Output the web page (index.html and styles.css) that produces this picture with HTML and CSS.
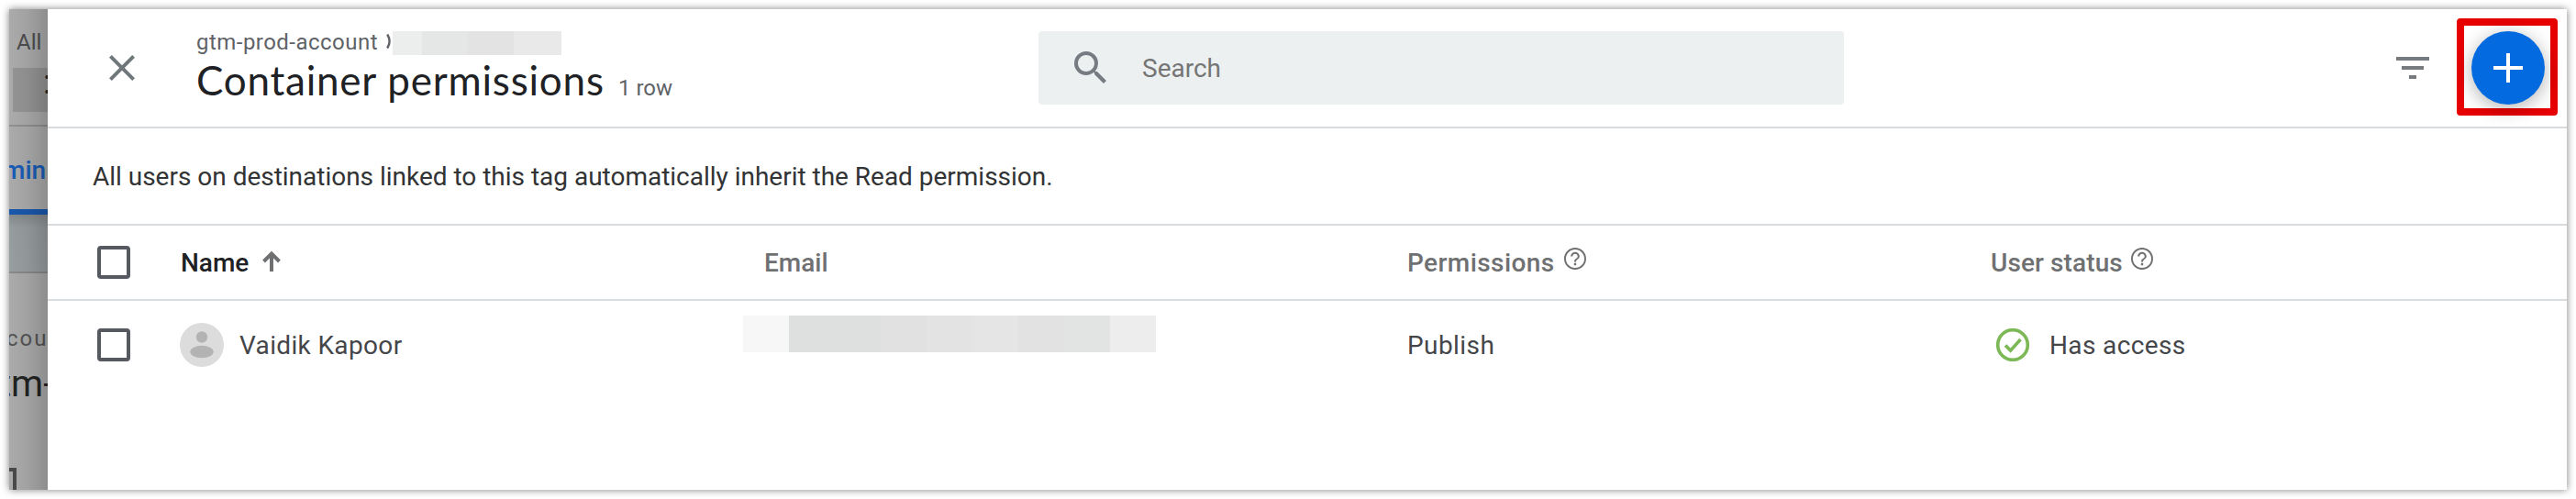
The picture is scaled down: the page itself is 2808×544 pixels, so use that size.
FILE: index.html
```html
<!DOCTYPE html>
<html lang="en">
<head>
<meta charset="utf-8">
<title>Container permissions</title>
<link rel="stylesheet" href="styles.css">
</head>
<body>
<div class="window">
  <aside class="backdrop">
    <div class="bd-top"><span class="bd-all">All</span><div class="bd-block"><span class="bd-dots">:</span></div></div>
    <div class="bd-tab"><span>min</span></div>
    <div class="bd-band"></div>
    <div class="bd-body">
      <span class="bd-label">cou</span>
      <span class="bd-name">tm-</span>
      <div class="bd-corner"></div>
    </div>
  </aside>
  <main class="panel">
    <header class="bar">
      <svg class="close" viewBox="0 0 24 24"><path d="M19 6.41L17.59 5 12 10.59 6.41 5 5 6.41 10.59 12 5 17.59 6.41 19 12 13.41 17.59 19 19 17.59 13.41 12z"/></svg>
      <div class="titles">
        <div class="crumb"><span class="t crumb-text">gtm-prod-account</span><svg class="chev" viewBox="0 0 6 18"><path d="M1.2 1.5Q6 9 1.2 16.5"/></svg><span class="redact small"><i class="a"></i><i class="b"></i><i class="c"></i><i class="d"></i></span></div>
        <div class="heading"><h1 class="t">Container permissions</h1><span class="t count">1 row</span></div>
      </div>
      <div class="search"><svg viewBox="0 0 24 24"><path d="M15.5 14h-.79l-.28-.27A6.471 6.471 0 0 0 16 9.5 6.5 6.5 0 1 0 9.5 16c1.61 0 3.09-.59 4.23-1.57l.27.28v.79l5 4.99L20.49 19l-4.99-5zm-6 0C7.01 14 5 11.99 5 9.5S7.01 5 9.5 5 14 7.01 14 9.5 11.99 14 9.5 14z"/></svg><span class="t">Search</span></div>
      <svg class="filter" viewBox="0 0 24 24"><path d="M10 18h4v-2h-4v2zM3 6v2h18V6H3zm3 7h12v-2H6v2z"/></svg>
      <div class="highlight"><button class="add" aria-label="Add"><svg viewBox="0 0 32 32"><path d="M14 0h4v14h14v4H18v14h-4V18H0v-4h14z"/></svg></button></div>
    </header>
    <p class="note"><span class="t">All users on destinations linked to this tag automatically inherit the Read permission.</span></p>
    <div class="row head">
      <div class="cell check"><span class="box"></span></div>
      <div class="cell name"><span class="t strong">Name</span><svg class="arrow" viewBox="0 0 20 22"><path d="M10 22V2.5M1.5 11L10 2.5 18.500 11"/></svg></div>
      <div class="cell email"><span class="t">Email</span></div>
      <div class="cell perm"><span class="t">Permissions</span><svg class="help" viewBox="2 2 20 20"><path d="M11 18h2v-2h-2v2zm1-16C6.480 2 2 6.480 2 12s4.480 10 10 10 10-4.480 10-10S17.520 2 12 2zm0 18.400c-4.630 0-8.400-3.770-8.400-8.400S7.370 3.600 12 3.600s8.400 3.770 8.400 8.400-3.770 8.400-8.400 8.400zM12 6c-2.210 0-4 1.790-4 4h1.700c0-1.270 1.030-2.300 2.300-2.300s2.300 1.030 2.300 2.300c0 2-3.150 1.750-3.150 5h1.700c0-2.250 3.150-2.500 3.150-5 0-2.210-1.790-4-4-4z"/></svg></div>
      <div class="cell status"><span class="t">User status</span><svg class="help" viewBox="2 2 20 20"><path d="M11 18h2v-2h-2v2zm1-16C6.480 2 2 6.480 2 12s4.480 10 10 10 10-4.480 10-10S17.520 2 12 2zm0 18.400c-4.630 0-8.400-3.770-8.400-8.400S7.370 3.600 12 3.600s8.400 3.770 8.400 8.400-3.770 8.400-8.400 8.400zM12 6c-2.210 0-4 1.790-4 4h1.700c0-1.270 1.030-2.300 2.300-2.300s2.300 1.030 2.300 2.300c0 2-3.150 1.750-3.150 5h1.700c0-2.250 3.150-2.500 3.150-5 0-2.210-1.790-4-4-4z"/></svg></div>
    </div>
    <div class="row user">
      <div class="cell check"><span class="box"></span></div>
      <div class="cell name"><svg class="avatar" viewBox="0 0 48 48"><circle class="av-bg" cx="24" cy="24" r="24"/><circle class="av-fg" cx="24" cy="15.500" r="6.200"/><ellipse class="av-fg" cx="24" cy="31.500" rx="12.700" ry="6.800"/></svg><span class="t">Vaidik Kapoor</span></div>
      <div class="cell email"><span class="redact big"><i class="e1"></i><i class="e2"></i><i class="e3"></i><i class="e4"></i><i class="e5"></i><i class="e6"></i><i class="e7"></i><i class="e8"></i></span></div>
      <div class="cell perm"><span class="t">Publish</span></div>
      <div class="cell status"><svg class="ok" viewBox="0 0 36 36"><circle cx="18" cy="18" r="16.300"/><path d="M10 18.500l5.600 5.600L26.500 12"/></svg><span class="t access">Has access</span></div>
    </div>
  </main>
</div>
</body>
</html>
```
FILE: styles.css
```css
* { box-sizing: border-box; }
body { margin: 0; padding: 10px; height: 544px; background: #fff; font-family: Roboto, sans-serif; overflow: hidden; }
.window { display: flex; width: 2788px; height: 524px; background: #fff; box-shadow: 0 0 8px rgba(0,0,0,.5); overflow: hidden; }
svg { display: block; flex: none; }
.t { white-space: nowrap; flex: none; }

.backdrop { position: relative; flex: none; width: 42px; height: 524px; overflow: hidden; background: #ababab; display: flex; flex-direction: column; }
.backdrop::after { content: ""; position: absolute; inset: 0; background: linear-gradient(90deg, rgba(0,0,0,0) 0, rgba(0,0,0,.06) 50%, rgba(0,0,0,.18) 100%); }
.bd-top { flex: none; height: 128px; padding: 22px 0 0 4px; border-bottom: 2px solid #909090; }
.bd-all { display: block; padding-left: 4px; height: 42px; font-size: 24px; line-height: 28px; color: #4c4d4f; }
.bd-block { height: 48px; background: #959595; padding-left: 33px; overflow: hidden; }
.bd-dots { display: block; font-size: 36px; line-height: 32px; color: #222; }
.bd-tab { flex: none; height: 96px; border-bottom: 6px solid #1a58ad; padding-top: 32px; color: #1a5cb5; font-size: 28px; line-height: 32px; font-weight: 500; }
.bd-tab span { display: block; margin-left: -7px; }
.bd-band { flex: none; height: 64px; background: linear-gradient(#84898b 0, #979c9e 14px, #999fa1 100%); border-bottom: 2px solid #87898a; }
.bd-body { flex: 1; padding-top: 57px; display: flex; flex-direction: column; }
.bd-label { margin-left: -3px; height: 41px; font-size: 24px; line-height: 28px; letter-spacing: 2px; color: #555; }
.bd-name { margin-left: -11px; font-size: 40px; line-height: 46px; color: #222; height: 114px; }
.bd-corner { width: 8px; height: 24px; border: 4px solid #4a4a4a; border-left: 0; border-bottom: 0; flex: none; }

.panel { flex: 1; min-width: 0; background: #fff; }
.bar { display: flex; height: 130px; border-bottom: 2px solid #d8dcdf; }
.close { width: 48px; height: 48px; margin: 40px 0 0 57px; fill: #70777a; }
.titles { width: 975px; padding: 22px 0 0 57px; flex: none; }
.crumb { display: flex; height: 30px; font-size: 24px; line-height: 28px; color: #5f6368; letter-spacing: .47px; }
.crumb-text { width: 207px; }
.chev { width: 6px; height: 18px; margin-top: 4px; fill: none; stroke: #5f6368; stroke-width: 2.400; }
.redact { display: flex; flex: none; }
.redact i { display: block; flex: none; }
.small { height: 26px; margin: 2px 0 0 1px; }
.small .a { width: 32px; background: #eceeed; }
.small .b { width: 50px; background: #e5e7e6; }
.small .c { width: 50px; background: #e2e3e2; }
.small .d { width: 52px; background: #e9e9e9; }
.heading { display: flex; align-items: baseline; }
h1 { margin: 0; width: 460px; font-family: Lato, sans-serif; font-weight: 400; font-size: 44px; line-height: 51px; letter-spacing: .78px; color: #202124; }
.count { font-size: 24px; line-height: 28px; color: #5f6368; }
.search { flex: none; margin: 24px 0 0; width: 878px; height: 80px; border-radius: 4px; background: #ecf0f1; display: flex; align-items: center; padding-left: 33px; color: #757575; font-size: 28px; }
.search svg { width: 48px; height: 48px; fill: #757b80; margin-right: 32px; }
.filter { width: 48px; height: 48px; margin: 40px 24px 0 596px; fill: #757b7e; }
.highlight { flex: none; width: 110px; height: 106px; margin-top: 10px; border: 8px solid #e60000; border-radius: 4px; padding: 6px 0 0 8px; }
.add { display: flex; align-items: center; justify-content: center; width: 80px; height: 80px; padding: 0; border: 0; border-radius: 50%; background: #036ae0; box-shadow: 0 4px 20px rgba(0,0,0,.3); }
.add svg { width: 32px; height: 32px; fill: #fff; }
.note { margin: 0; height: 106px; padding: 37px 0 0 49px; border-bottom: 2px solid #d8dcdf; font-size: 28px; line-height: 32px; letter-spacing: -.015px; color: #323335; }
.row { display: flex; font-size: 28px; line-height: 32px; }
.head { height: 82px; border-bottom: 2px solid #d8dcdf; color: #6f7072; font-weight: 500; }
.user { height: 100px; color: #444649; }
.cell { display: flex; flex: none; }
.head .cell { padding-top: 25px; }
.user .cell { padding-top: 33px; }
.check { width: 144px; padding-left: 54px; }
.box { width: 36px; height: 36px; margin-top: -3px; border: 4px solid #56595f; border-radius: 4px; }
.name { width: 637px; }
.head .name { padding-left: 1px; }
.strong { color: #202124; }
.arrow { width: 20px; height: 22px; margin: 3px 0 0 15px; fill: none; stroke: #6f7072; stroke-width: 4; }
.avatar { width: 48px; height: 48px; margin: -9px 17px 0 0; }
.user .name { letter-spacing: .35px; }
.av-bg { fill: #dcdcdc; }
.av-fg { fill: #b3b3b3; }
.email { width: 701px; }
.big { height: 40px; margin: -17px 0 0 -23px; }
.big i { width: 50px; }
.big .e1 { background: #f7f7f7; }
.big .e2 { width: 100px; background: #dde0de; }
.big .e3 { background: #e1e1e1; }
.big .e4 { background: #e3e3e3; }
.big .e5 { background: #e5e5e5; }
.big .e6 { background: #e2e2e2; }
.big .e7 { background: #e2e4e3; }
.big .e8 { background: #ededed; }
.perm { width: 634px; letter-spacing: .42px; }
.perm .help { margin-left: 10px; }
.head .status { padding-left: 2px; letter-spacing: .1px; }
.help { width: 24px; height: 24px; margin: -1px 0 0 9px; fill: #6f7072; }
.ok { width: 36px; height: 36px; margin: -3px 22px 0 8px; fill: none; stroke: #7cb855; stroke-width: 3.600; }
.access { letter-spacing: .38px; }
```
